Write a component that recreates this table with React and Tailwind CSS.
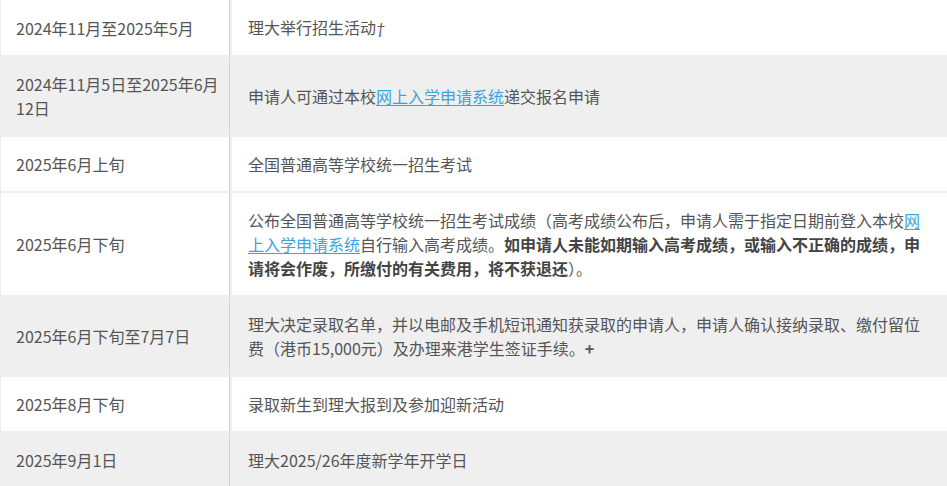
const rows = [
  {
    date: "2024年11月至2025年5月",
    bg: "bg-white",
    body: (
      <>
        理大举行招生活动
        <i className="italic" style={{ fontFamily: "Lato, sans-serif" }}>
          †
        </i>
      </>
    ),
  },
  {
    date: (
      <>
        <span className="whitespace-nowrap">2024年11月5日至2025年6月</span>
        <br />
        12日
      </>
    ),
    bg: "bg-[#efefef]",
    body: (
      <>
        申请人可通过本校
        <a href="#" className="text-[#3ba3dd] underline underline-offset-2">
          网上入学申请系统
        </a>
        递交报名申请
      </>
    ),
  },
  {
    date: "2025年6月上旬",
    bg: "bg-white",
    body: "全国普通高等学校统一招生考试",
  },
  {
    date: "2025年6月下旬",
    bg: "bg-white",
    body: (
      <>
        公布全国普通高等学校统一招生考试成绩（高考成绩公布后，申请人需于指定日期前登入本校
        <a href="#" className="text-[#3ba3dd] underline underline-offset-2">
          网
          <br />
          上入学申请系统
        </a>
        自行输入高考成绩。
        <strong className="font-bold text-[#444]">
          如申请人未能如期输入高考成绩，或输入不正确的成绩，申
          <br />
          请将会作废，所缴付的有关费用，将不获退还
        </strong>
        ）。
      </>
    ),
  },
  {
    date: "2025年6月下旬至7月7日",
    bg: "bg-[#efefef]",
    body: (
      <>
        理大决定录取名单，并以电邮及手机短讯通知获录取的申请人，申请人确认接纳录取、缴付留位
        <br />
        费（港币15,000元）及办理来港学生签证手续。<span className="font-bold">+</span>
      </>
    ),
  },
  {
    date: "2025年8月下旬",
    bg: "bg-white",
    body: "录取新生到理大报到及参加迎新活动",
  },
  {
    date: "2025年9月1日",
    bg: "bg-[#efefef]",
    body: "理大2025/26年度新学年开学日",
  },
];

export default function App() {
  return (
    <div
      className="w-[947px] h-[486px] overflow-hidden bg-[#efefef] pl-px flex flex-col gap-[2px] text-[16px] leading-6 text-[#555]"
      style={{ fontFamily: '"Noto Sans CJK SC", "Noto Sans", sans-serif' }}
    >
      {rows.map((row, i) => (
        <div key={i} className="flex gap-[2px] shrink-0">
          <div
            className={`${row.bg} w-[229px] shrink-0 border-r border-[#d2d2d2] pl-[15px] pr-1 py-[15px] flex items-center`}
          >
            <div>{row.date}</div>
          </div>
          <div className={`${row.bg} flex-1 pl-4 pr-3 py-[15px] flex items-center`}>
            <div>{row.body}</div>
          </div>
        </div>
      ))}
    </div>
  );
}
